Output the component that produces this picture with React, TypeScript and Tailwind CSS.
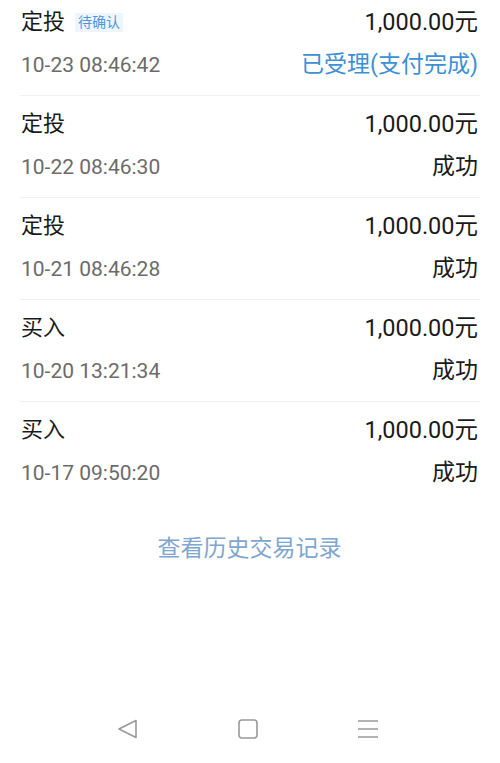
import React from "react";

const rows = [
  { title: "定投", tag: true, amount: "1,000.00元", time: "10-23 08:46:42", status: "已受理(支付完成)", blue: true },
  { title: "定投", amount: "1,000.00元", time: "10-22 08:46:30", status: "成功" },
  { title: "定投", amount: "1,000.00元", time: "10-21 08:46:28", status: "成功" },
  { title: "买入", amount: "1,000.00元", time: "10-20 13:21:34", status: "成功" },
  { title: "买入", amount: "1,000.00元", time: "10-17 09:50:20", status: "成功" },
];

const font = { fontFamily: 'Roboto, "Noto Sans CJK SC", sans-serif' };

export default function App() {
  return (
    <div className="w-[500px] h-[763px] bg-white flex flex-col" style={font}>
      <div className="flex flex-col">
        {rows.map((r, i) => (
          <div
            key={i}
            className={`mx-[20px] flex flex-col pb-[15px] ${i === 0 ? "pt-[7px]" : "pt-[13px]"} ${i < rows.length - 1 ? "border-b border-[#f0f0f0]" : ""}`}
          >
            <div className="h-[30px] flex items-center justify-between pl-[1px] pr-[2px]">
              <div className="flex items-center">
                <span className="text-[22px] text-[#1a1a1a] leading-[30px]">{r.title}</span>
                {r.tag && (
                  <span className="ml-[10px] px-[3px] h-[19px] flex items-center text-[14px] leading-none text-[#4a98dc] bg-[#eef6fd]">
                    待确认
                  </span>
                )}
              </div>
              <span className="text-[23.5px] text-[#1a1a1a] leading-[30px]">{r.amount}</span>
            </div>
            <div className="h-[30px] mt-[13px] flex items-center justify-between pl-[1px] pr-[2px]">
              <span className="text-[21px] text-[#6b6b6b] leading-[30px]">{r.time}</span>
              <span className={`text-[23px] leading-[30px] ${r.blue ? "text-[#3d8fd6]" : "text-[#1a1a1a]"}`}>
                {r.status}
              </span>
            </div>
          </div>
        ))}
      </div>
      <div className="mt-[31px] flex justify-center pr-[1px]">
        <span className="text-[23px] leading-[30px] text-[#7fa6cf]">查看历史交易记录</span>
      </div>
      <div className="flex-1" />
      <div className="h-[50px] mb-[9px] flex items-center justify-center gap-[98px] pr-[4px]">
        <svg width="22" height="22" viewBox="0 0 22 22" fill="none" stroke="#9a9a9a" strokeWidth="1.6" strokeLinejoin="round">
          <path d="M2 11 L19 2.5 L19 19.5 Z" />
        </svg>
        <svg width="22" height="22" viewBox="0 0 22 22" fill="none" stroke="#9a9a9a" strokeWidth="1.6">
          <rect x="2" y="2" width="18" height="18" rx="3" />
        </svg>
        <svg width="22" height="22" viewBox="0 0 22 22" fill="none" stroke="#9a9a9a" strokeWidth="1.5">
          <path d="M1 3 H21 M1 11 H21 M1 19 H21" />
        </svg>
      </div>
    </div>
  );
}
